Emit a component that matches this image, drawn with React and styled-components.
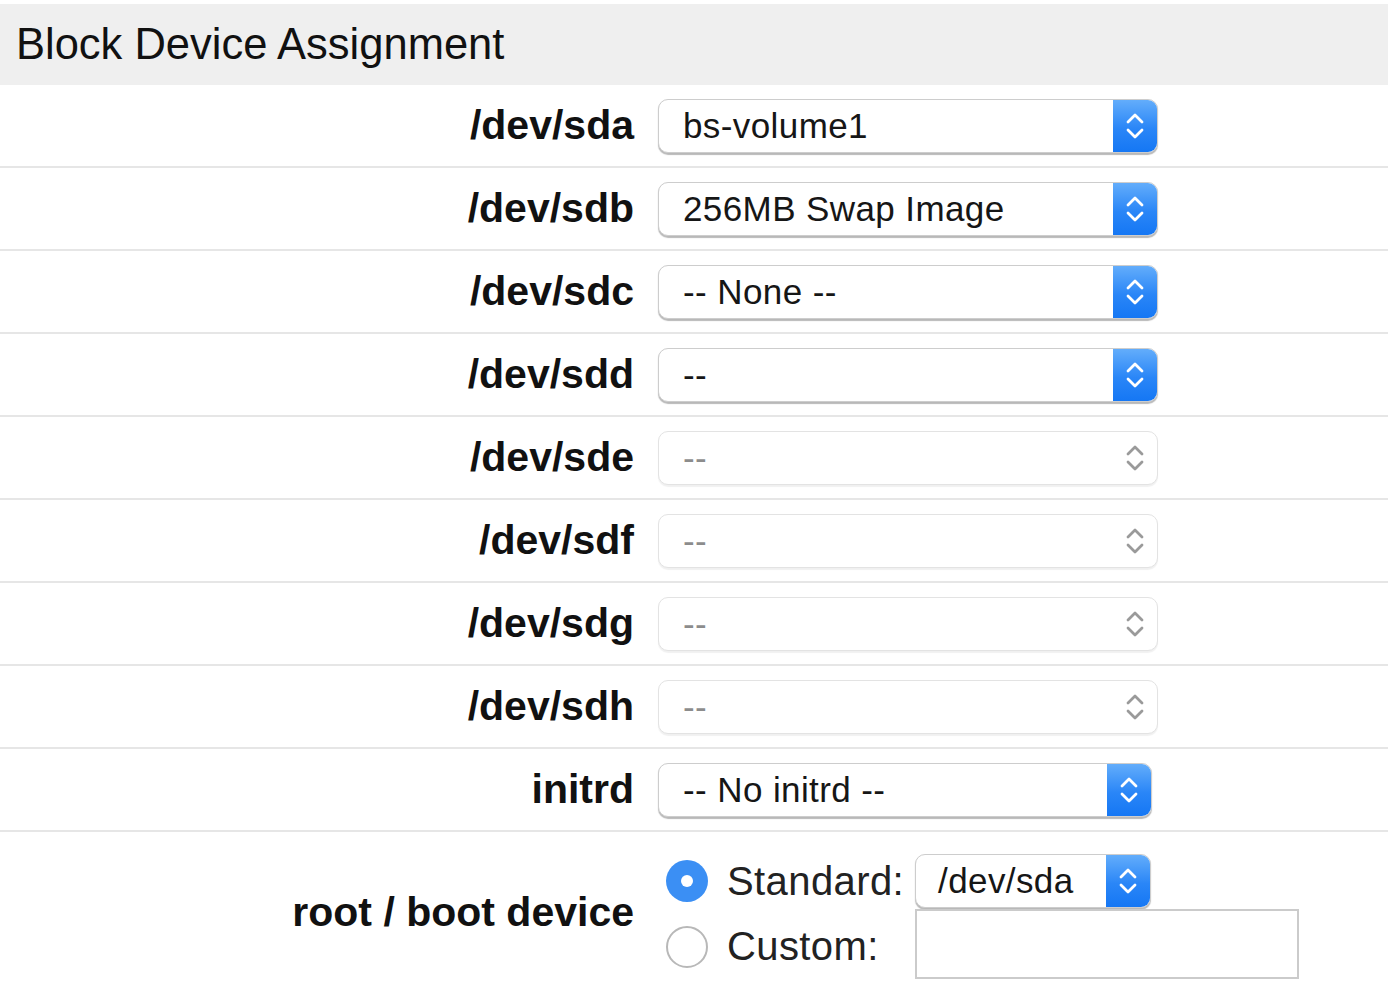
import React from 'react';
import styled, { createGlobalStyle } from 'styled-components';

const GlobalStyle = createGlobalStyle`
  html, body {
    margin: 0;
    padding: 0;
    background: #ffffff;
  }
  body {
    font-family: "Liberation Sans", Arial, Helvetica, sans-serif;
    color: #111111;
  }
`;

const Page = styled.div`
  width: 1388px;
  padding-top: 4px;
  box-sizing: border-box;
`;

const Header = styled.div`
  height: 81px;
  background: #efefef;
  display: flex;
  align-items: center;
  padding-left: 16px;
  font-size: 43.5px;
  color: #111;
`;

const FormRow = styled.div`
  display: grid;
  grid-template-columns: 634px 1fr;
  column-gap: 24px;
  align-items: center;
  min-height: ${(p) => p.height || 81}px;
  border-bottom: ${(p) => (p.last ? 'none' : '2.4px solid #e6e6e6')};
`;

const Label = styled.div`
  text-align: right;
  font-weight: bold;
  font-size: 41px;
  color: #111;
`;

const SelectBox = styled.div`
  width: ${(p) => p.width}px;
  height: 54px;
  box-sizing: border-box;
  border: 1.5px solid ${(p) => (p.disabled ? '#e3e3e3' : '#cdcdcd')};
  border-radius: 10px;
  background: #fff;
  box-shadow: ${(p) =>
    p.disabled ? '0 1.5px 1px rgba(0,0,0,0.06)' : '0 1.5px 1px rgba(0,0,0,0.28)'};
  display: flex;
  align-items: center;
  overflow: hidden;
`;

const SelectText = styled.span`
  flex: 1;
  padding-left: ${(p) => p.pad || 24}px;
  font-size: 35px;
  letter-spacing: 0.4px;
  color: ${(p) => (p.muted ? '#8c8c8c' : '#161616')};
  white-space: nowrap;
`;

const Stepper = styled.div`
  width: 44px;
  height: 100%;
  display: flex;
  align-items: center;
  justify-content: center;
  background: ${(p) =>
    p.disabled ? 'transparent' : 'linear-gradient(180deg, #63adfb 0%, #2a86f7 55%, #1577f4 100%)'};
`;

const RootControls = styled.div`
  display: grid;
  grid-template-columns: 42px auto 1fr;
  column-gap: 19px;
  row-gap: 1px;
  align-items: center;
  padding: 21px 0 12px 8px;
`;

const Radio = styled.span`
  width: 42px;
  height: 42px;
  border-radius: 50%;
  box-sizing: border-box;
  display: flex;
  align-items: center;
  justify-content: center;
  margin-top: ${(p) => (p.checked ? 0 : 5)}px;
  background: ${(p) => (p.checked ? '#3b8ff4' : '#fff')};
  border: ${(p) => (p.checked ? 'none' : '2.5px solid #b8b8b8')};
  &::after {
    content: '';
    display: ${(p) => (p.checked ? 'block' : 'none')};
    width: 12px;
    height: 12px;
    border-radius: 50%;
    background: #fff;
  }
`;

const RadioLabel = styled.span`
  font-size: 40px;
  letter-spacing: 0.4px;
  color: #222;
  margin-right: -8px;
  margin-top: ${(p) => p.offset || 0}px;
`;

const TextInput = styled.div`
  width: 384px;
  height: 70px;
  box-sizing: border-box;
  border: 2px solid #cbcbcb;
  background: #fff;
`;

const Chevrons = ({ disabled }) => (
  <svg width="20" height="30" viewBox="0 0 20 30">
    <path
      d="M3 11 L10 4 L17 11 M3 19 L10 26 L17 19"
      fill="none"
      stroke={disabled ? '#9a9a9a' : '#ffffff'}
      strokeWidth="2.8"
      strokeLinecap="round"
      strokeLinejoin="round"
    />
  </svg>
);

const Select = ({ value, width = 500, disabled, muted, pad }) => (
  <SelectBox width={width} disabled={disabled}>
    <SelectText muted={muted || disabled} pad={pad}>{value}</SelectText>
    <Stepper disabled={disabled}>
      <Chevrons disabled={disabled} />
    </Stepper>
  </SelectBox>
);

const devices = [
  { dev: '/dev/sda', value: 'bs-volume1' },
  { dev: '/dev/sdb', value: '256MB Swap Image' },
  { dev: '/dev/sdc', value: '-- None --' },
  { dev: '/dev/sdd', value: '--' },
  { dev: '/dev/sde', value: '--', disabled: true },
  { dev: '/dev/sdf', value: '--', disabled: true },
  { dev: '/dev/sdg', value: '--', disabled: true },
  { dev: '/dev/sdh', value: '--', disabled: true },
];

export default function App() {
  return (
    <Page>
      <GlobalStyle />
      <Header>Block Device Assignment</Header>
      {devices.map((d) => (
        <FormRow key={d.dev}>
          <Label>{d.dev}</Label>
          <Select value={d.value} disabled={d.disabled} />
        </FormRow>
      ))}
      <FormRow>
        <Label>initrd</Label>
        <Select value="-- No initrd --" width={494} />
      </FormRow>
      <FormRow last height={160}>
        <Label>root / boot device</Label>
        <RootControls>
          <Radio checked />
          <RadioLabel>Standard:</RadioLabel>
          <Select value="/dev/sda" width={236} pad={22} />
          <Radio />
          <RadioLabel offset={5}>Custom:</RadioLabel>
          <TextInput />
        </RootControls>
      </FormRow>
    </Page>
  );
}
